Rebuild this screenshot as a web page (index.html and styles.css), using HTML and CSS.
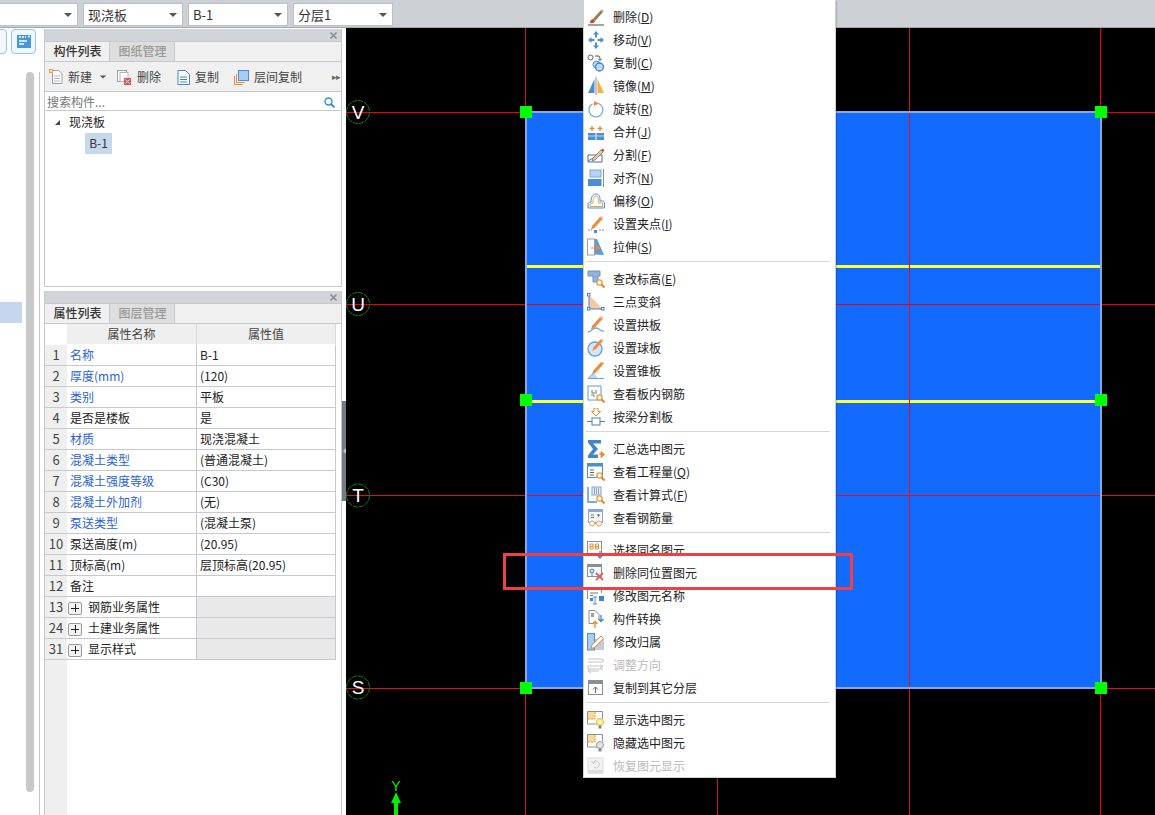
FILE: index.html
```html
<!DOCTYPE html>
<html lang="zh-CN">
<head>
<meta charset="utf-8">
<title>现浇板</title>
<link rel="stylesheet" href="styles.css">
</head>
<body>
<svg class="defs" width="0" height="0">
  <symbol id="pencil" viewBox="0 0 18 18"><path d="M6 13l8-9 2.500 2-8 9-3.500 1.500z" fill="#f08a3c"/><path d="M14 4l1-1 2.500 2-1 1z" fill="#f5b27a"/></symbol>
  <symbol id="mag" viewBox="0 0 18 18"><circle cx="11.500" cy="11.500" r="2.600" fill="#fff" stroke="#e8a13a" stroke-width="1.400"/><path d="M13.500 13.500l3 3" stroke="#ee7f2d" stroke-width="2"/></symbol>
</svg>

<header class="topbar">
  <div class="select s0"><span></span><i class="caret"></i></div>
  <div class="select"><span>现浇板</span><i class="caret"></i></div>
  <div class="select"><span>B-1</span><i class="caret"></i></div>
  <div class="select"><span>分层1</span><i class="caret"></i></div>
</header>

<main class="main">
  <aside class="side">
    <div class="side-btns">
      <div class="sbtn cut"></div>
      <div class="sbtn"><svg width="14" height="13" viewBox="0 0 14 13"><rect width="14" height="13" fill="#4b95dd"/><path d="M2 2h2M5 2h2M8 2h1M11 1.500h2M2 6h8M2 9h5" stroke="#fff" stroke-width="1.300"/></svg></div>
    </div>
    <div class="side-body">
      <div class="side-list"><div class="side-sel"></div></div>
      <div class="side-scroll"></div>
    </div>
  </aside>

  <section class="panels">
    <div class="panel p1">
      <div class="ptitle"><svg width="9" height="9" viewBox="0 0 9 9"><path d="M1.500 1.500l6 6M7.500 1.500l-6 6" stroke="#8a8d92" stroke-width="1.700"/></svg></div>
      <div class="tabs"><span class="tab on">构件列表</span><span class="tab">图纸管理</span></div>
      <div class="tools">
        <span class="tool t-new"><svg width="14" height="16" viewBox="0 0 14 16"><path d="M3.500 1.500h6l3.500 3v10h-9.500z" fill="#fff" stroke="#9aa0a6"/><path d="M5 7h6M5 9.500h6M5 12h6" stroke="#b5b9bd"/><path d="M0 0h4v4h-4z" fill="#f0a040"/><path d="M1 1h2v2h-2z" fill="#fde7b5"/></svg>新建</span>
        <i class="caret t-caret"></i>
        <span class="tool t-del"><svg width="15" height="15" viewBox="0 0 15 15"><rect x=".5" y=".5" width="9" height="11" fill="#fff" stroke="#9aa0a6"/><rect x="3" y="2.500" width="8" height="9" fill="#fff" stroke="#b0b5ba"/><rect x="7" y="8" width="7" height="7" fill="#e05050"/><path d="M8.500 9.500l4 4M12.500 9.500l-4 4" stroke="#fff"/></svg>删除</span>
        <span class="tool t-copy"><svg width="13" height="15" viewBox="0 0 13 15"><path d="M1 .5h7.500l4 4v10h-11.500z" fill="#fff" stroke="#3f86cc"/><path d="M3 7h7M3 9.500h7M3 12h7" stroke="#3f86cc"/></svg>复制</span>
        <span class="tool t-floor"><svg width="15" height="15" viewBox="0 0 15 15"><path d="M.5 6v8.500h8M2.500 4v8.500h8" fill="none" stroke="#e08a45"/><rect x="4.500" y=".5" width="10" height="10" fill="#a9cdf2" stroke="#4b8fd6"/></svg>层间复制</span>
        <span class="more">▸▸</span>
      </div>
      <div class="search"><span>搜索构件...</span><svg width="11" height="11" viewBox="0 0 11 11"><circle cx="4.500" cy="4.500" r="3.500" fill="none" stroke="#2f90c8" stroke-width="1.400"/><path d="M7 7l3.500 3.500" stroke="#2f90c8" stroke-width="1.800"/></svg></div>
      <div class="tree">
        <div class="tnode"><i class="tarrow"></i><span>现浇板</span></div>
        <div class="tleaf"><span>B-1</span></div>
      </div>
    </div>

    <div class="panel p2">
      <div class="ptitle"><svg width="9" height="9" viewBox="0 0 9 9"><path d="M1.500 1.500l6 6M7.500 1.500l-6 6" stroke="#8a8d92" stroke-width="1.700"/></svg></div>
      <div class="tabs"><span class="tab on">属性列表</span><span class="tab">图层管理</span></div>
      <div class="grid">
        <table class="props">
          <colgroup><col class="c0"><col class="c1"><col class="c2"></colgroup>
          <thead><tr><th class="blank"></th><th>属性名称</th><th>属性值</th></tr></thead>
          <tbody>
            <tr><td class="n">1</td><td class="k">名称</td><td>B-1</td></tr>
            <tr><td class="n">2</td><td class="k">厚度(mm)</td><td>(120)</td></tr>
            <tr><td class="n">3</td><td class="k">类别</td><td>平板</td></tr>
            <tr><td class="n">4</td><td>是否是楼板</td><td>是</td></tr>
            <tr><td class="n">5</td><td class="k">材质</td><td>现浇混凝土</td></tr>
            <tr><td class="n">6</td><td class="k">混凝土类型</td><td>(普通混凝土)</td></tr>
            <tr><td class="n">7</td><td class="k">混凝土强度等级</td><td>(C30)</td></tr>
            <tr><td class="n">8</td><td class="k">混凝土外加剂</td><td>(无)</td></tr>
            <tr><td class="n">9</td><td class="k">泵送类型</td><td>(混凝土泵)</td></tr>
            <tr><td class="n">10</td><td>泵送高度(m)</td><td>(20.95)</td></tr>
            <tr><td class="n">11</td><td>顶标高(m)</td><td>层顶标高(20.95)</td></tr>
            <tr><td class="n">12</td><td>备注</td><td></td></tr>
            <tr class="grp"><td class="n">13</td><td><i class="plus"></i>钢筋业务属性</td><td></td></tr>
            <tr class="grp"><td class="n">24</td><td><i class="plus"></i>土建业务属性</td><td></td></tr>
            <tr class="grp"><td class="n">31</td><td><i class="plus"></i>显示样式</td><td></td></tr>
          </tbody>
        </table>
      </div>
    </div>
  </section>

  <div class="splitter"><div class="grip"><i></i></div></div>

  <section class="canvas">
    <svg class="cad" width="809" height="787" viewBox="346 28 809 787" shape-rendering="crispEdges">
      <rect x="346" y="28" width="809" height="787" fill="#000"/>
      <rect x="526" y="112" width="575" height="576" fill="#126aff"/>
      <rect x="527" y="265" width="573" height="3" fill="#ffff33"/>
      <rect x="527" y="400" width="573" height="3" fill="#ffff33"/>
      <g fill="#d81414">
        <rect x="525" y="28" width="1" height="787"/>
        <rect x="717" y="688" width="1" height="127"/>
        <rect x="909" y="28" width="1" height="787"/>
        <rect x="346" y="495" width="809" height="1"/>
        <rect x="346" y="688" width="809" height="1"/>
      </g>
      <g fill="#f00000">
        <rect x="1100" y="28" width="1" height="787"/>
        <rect x="346" y="112" width="809" height="1"/>
        <rect x="346" y="304" width="809" height="1"/>
      </g>
      <path d="M526 112h575v576h-575z" fill="none" stroke="#86a9ee" stroke-width="2"/>
      <g fill="#00ff00">
        <rect x="520" y="106" width="12" height="12"/><rect x="1095" y="106" width="12" height="12"/>
        <rect x="520" y="394" width="12" height="12"/><rect x="1095" y="394" width="12" height="12"/>
        <rect x="520" y="682" width="12" height="12"/><rect x="1095" y="682" width="12" height="12"/>
      </g>
      <g shape-rendering="auto">
        <g fill="none" stroke="#0c8a0c" stroke-dasharray="5 1">
          <circle cx="358" cy="112" r="11.500"/><circle cx="358" cy="304" r="11.500"/>
          <circle cx="358" cy="495.500" r="11.500"/><circle cx="358" cy="687.500" r="11.500"/>
        </g>
        <g class="axis">
          <text x="358" y="119">V</text><text x="358" y="311">U</text>
          <text x="358" y="502">T</text><text x="358" y="694">S</text>
        </g>
        <text class="yaxis" x="396" y="791">Y</text>
        <path d="M391 803l5-11 5 11h-3v12h-4v-12z" fill="#00ee00"/>
      </g>
    </svg>
  </section>
</main>

<nav class="menu">
  <div class="mi"><svg viewBox="0 0 18 18"><path d="M6 11l8-9 2 2-8 9z" fill="#9a7a52"/><path d="M14 2l1-1 2 2-1 1z" fill="#d7b98c"/><path d="M3 15c0-3 2-4 3-4l2 2c0 1.500-2 2.500-5 2z" fill="#cc4a22"/><path d="M1 17h16" stroke="#444"/></svg><span>删除(<u>D</u>)</span></div>
  <div class="mi"><svg viewBox="0 0 18 18"><g fill="#4a8fd6"><path d="M9 0l3 3.500h-2v3h-2v-3h-2zM9 18l3-3.500h-2v-3h-2v3h-2zM1 9l3.500-3v2h3v2h-3v2zM17 9l-3.500-3v2h-3v2h3v2z"/></g></svg><span>移动(<u>V</u>)</span></div>
  <div class="mi"><svg viewBox="0 0 18 18"><circle cx="3.500" cy="3.500" r="2.500" fill="#fff" stroke="#666"/><path d="M8 2h4l1 2v2M11.500 5l1.500 1.500 1.500-1.500" fill="none" stroke="#555"/><circle cx="9.500" cy="10.500" r="3.500" fill="#bcd8f4" stroke="#4a8fd6"/><circle cx="12.500" cy="13" r="4" fill="#bcd8f4" stroke="#3f86cc" stroke-width="1.300"/></svg><span>复制(<u>C</u>)</span></div>
  <div class="mi"><svg viewBox="0 0 18 18"><path d="M7.500 2v14h-6.500z" fill="#4a8fd6"/><path d="M10.500 2v14h6.500z" fill="#f4b23c"/><path d="M9 0v18" stroke="#8a8f95"/></svg><span>镜像(<u>M</u>)</span></div>
  <div class="mi"><svg viewBox="0 0 18 18"><path d="M5.500 3.800a7 7 0 1 0 6 -.4" fill="none" stroke="#7db0e4" stroke-width="1.400"/><path d="M7 1l5 2.500-5 2.500z" fill="#f0862e"/></svg><span>旋转(<u>R</u>)</span></div>
  <div class="mi"><svg viewBox="0 0 18 18"><rect x="1" y="10" width="7.500" height="7" fill="#4a8fd6"/><rect x="9.500" y="10" width="7.500" height="7" fill="#4a8fd6"/><path d="M1 13h16" stroke="#bcd8f4"/><path d="M5 3v5M2.500 5.500h5M13 3v5M10.500 5.500h5" stroke="#f0862e" stroke-width="1.300"/></svg><span>合并(<u>J</u>)</span></div>
  <div class="mi"><svg viewBox="0 0 18 18"><path d="M1 9h14v7h-14z" fill="none" stroke="#4d6ea8"/><path d="M1 15l9-5" stroke="#777"/><path d="M6 12l8-8 2 2-8 8-3 1z" fill="#e8c89a" stroke="#555" stroke-width=".6"/><path d="M14 4l1.500-1.500 2 2-1.500 1.500z" fill="#c0503a"/></svg><span>分割(<u>F</u>)</span></div>
  <div class="mi"><svg viewBox="0 0 18 18"><rect x="3" y="1" width="11" height="7" fill="#b8d4f2" stroke="#7aa8dc"/><rect x="1" y="10" width="13.500" height="7" fill="#4a8fd6"/><path d="M16.500 0v18" stroke="#8a8f95"/></svg><span>对齐(<u>N</u>)</span></div>
  <div class="mi"><svg viewBox="0 0 18 18"><path d="M1 16v-4c0-1 1-2 3-2 0-4 1-8 5-8s4 4 4 7h3c1 0 1.500 1 1.500 2v5z" fill="#fff" stroke="#4a8fd6"/><path d="M3 14.500v-2.500c1-.5 2-.5 3-1 0-3 .5-7 3-7s2.500 4 2.500 7h4v3.500z" fill="#fff" stroke="#e09a3a" stroke-width=".9"/></svg><span>偏移(<u>O</u>)</span></div>
  <div class="mi"><svg viewBox="0 0 18 18"><use href="#pencil" x="-1" y="-2" width="18" height="18"/><path d="M1 15h4M12 15h5" stroke="#8a8f95" stroke-dasharray="2 1"/><rect x="7" y="15" width="3" height="3" fill="#4a8fd6"/></svg><span>设置夹点(<u>I</u>)</span></div>
  <div class="mi"><svg viewBox="0 0 18 18"><rect x=".5" y="1" width="7" height="16" fill="#fff" stroke="#9aa0a6"/><path d="M8 16.500v-15.500l2 0 7 16z" fill="#5c9ade"/><path d="M4 10h8M10 7.500l3 2.500-3 2.500z" fill="#f0862e" stroke="#f0862e"/></svg><span>拉伸(<u>S</u>)</span></div>
  <div class="sep"></div>
  <div class="mi"><svg viewBox="0 0 18 18"><path d="M1 1h12v5h-2v6h-5v-6h-5z" fill="#8fb3d9" stroke="#6d94bf"/><use href="#mag" x="1" y="1" width="18" height="18"/></svg><span>查改标高(<u>E</u>)</span></div>
  <div class="mi"><svg viewBox="0 0 18 18"><path d="M2 2v14h14z" fill="#f9c9a5"/><path d="M2 3.500v11M3.500 16h11" stroke="#4a7fc4"/><g fill="#fff" stroke="#4a7fc4"><rect x=".5" y=".5" width="2.500" height="2.500"/><rect x=".5" y="14.500" width="2.500" height="2.500"/><rect x="14.500" y="14.500" width="2.500" height="2.500"/></g></svg><span>三点变斜</span></div>
  <div class="mi"><svg viewBox="0 0 18 18"><use href="#pencil" x="-1" y="-3" width="18" height="18"/><path d="M1 16c3 0 4-4 8-4s4 4 8 3" fill="none" stroke="#7aa8dc" stroke-width="1.400"/></svg><span>设置拱板</span></div>
  <div class="mi"><svg viewBox="0 0 18 18"><circle cx="8" cy="10" r="7" fill="#d5e6f8" stroke="#6a9fd8" stroke-width="1.400"/><use href="#pencil" x="1" y="-3" width="16" height="16"/></svg><span>设置球板</span></div>
  <div class="mi"><svg viewBox="0 0 18 18"><use href="#pencil" x="0" y="-4" width="18" height="18"/><path d="M1 16.500l6-6 4 6z" fill="#bcd8f4"/><path d="M1 16.500h16M1 16.500l6-6" fill="none" stroke="#6a9fd8"/></svg><span>设置锥板</span></div>
  <div class="mi"><svg viewBox="0 0 18 18"><rect x="1" y="1" width="13" height="14" fill="#fff" stroke="#5c9ade"/><path d="M5 5v3h3M4 10h3v2M9 5v4" fill="none" stroke="#777"/><use href="#mag" x="1" y="1" width="18" height="18"/></svg><span>查看板内钢筋</span></div>
  <div class="mi"><svg viewBox="0 0 18 18"><path d="M7 0h4v3.500h2.500l-4.500 4.500-4.500-4.500h2.500z" fill="#fff" stroke="#f0862e"/><rect x="5" y="10" width="8" height="7" fill="#fff" stroke="#4a7fc4"/><path d="M0 13.500h5M13 13.500h5" stroke="#4a7fc4"/></svg><span>按梁分割板</span></div>
  <div class="sep"></div>
  <div class="mi"><svg viewBox="0 0 18 18"><path d="M1 0h13v3.500h-8l5 5.500-5 5.500h5v3.500h-10v-2.500l5-6.500-5-6.500z" fill="#3f86cc"/><path d="M12 14h3M14 11.500l3.500 3-3.500 3z" fill="#f0862e" stroke="#f0862e"/></svg><span>汇总选中图元</span></div>
  <div class="mi"><svg viewBox="0 0 18 18"><rect x=".5" y=".5" width="15" height="14" fill="#fff" stroke="#4a8fd6"/><rect x=".5" y=".5" width="15" height="3" fill="#4a8fd6"/><path d="M3 7h4M3 9.500h4M3 12h4" stroke="#666"/><use href="#mag" x="1" y="1" width="18" height="18"/></svg><span>查看工程量(<u>Q</u>)</span></div>
  <div class="mi"><svg viewBox="0 0 18 18"><path d="M1 1v15h9" fill="none" stroke="#4a8fd6" stroke-width="1.400"/><rect x="5" y="1" width="9" height="8" fill="#dfeaf6" stroke="#7aa8dc"/><path d="M7 3h1M9 3h1M11 3h1M7 5h1M9 5h1M11 5h1M7 7h1M9 7h1M11 7h1" stroke="#666"/><use href="#mag" x="1" y="1" width="18" height="18"/></svg><span>查看计算式(<u>F</u>)</span></div>
  <div class="mi"><svg viewBox="0 0 18 18"><rect x="1.500" y=".5" width="14" height="13" fill="#f4f7fb" stroke="#8aa9cc"/><rect x="1.500" y=".5" width="14" height="2.500" fill="#8aa9cc"/><path d="M4 6h3M4 8.500h3M10 6h3M11.500 5v3" stroke="#777"/><circle cx="5" cy="14.500" r="2.500" fill="#fff" stroke="#ea9a55"/><circle cx="12" cy="14.500" r="2.500" fill="#fff" stroke="#ea9a55"/><path d="M7.500 14.500h2" stroke="#ea9a55"/></svg><span>查看钢筋量</span></div>
  <div class="sep"></div>
  <div class="mi"><svg viewBox="0 0 18 18"><rect x=".5" y=".5" width="14" height="14" fill="#fff" stroke="#8a8f95"/><path d="M3 3h3v5h-3zM3 5.500h3M8.500 3h3v5h-3zM8.500 5.500h3" fill="none" stroke="#f0862e"/><path d="M13 10v7M10.500 14.500l2.500 2.500 2.500-2.500" fill="none" stroke="#4a8fd6" stroke-width="1.300"/></svg><span>选择同名图元</span></div>
  <div class="mi"><svg viewBox="0 0 18 18"><rect x=".5" y=".5" width="14" height="12" fill="#f5f8fc" stroke="#8a8f95"/><rect x=".5" y=".5" width="14" height="2.500" fill="#8a8f95"/><circle cx="5" cy="7" r="2" fill="#bcd8f4" stroke="#4a8fd6"/><path d="M5 9v3" stroke="#4a8fd6"/><path d="M9 9l7 7M16 9l-7 7" stroke="#e0605a" stroke-width="1.800"/></svg><span>删除同位置图元</span></div>
  <div class="mi"><svg viewBox="0 0 18 18"><path d="M.5 12v-11h14v5" fill="none" stroke="#8a8f95"/><path d="M.5 1h14v2h-14z" fill="#4a8fd6"/><path d="M3 6h8M3 8.500h3" stroke="#777"/><rect x="12" y="9" width="5" height="5" fill="#3f86cc"/><path d="M6 10h4M8 10v7M6 17h4" stroke="#4a8fd6"/><rect x="3" y="11" width="3" height="3" fill="#3f86cc"/></svg><span>修改图元名称</span></div>
  <div class="mi"><svg viewBox="0 0 18 18"><path d="M2 .5h6l4 4v5M2 .5v13h5" fill="none" stroke="#8a8f95"/><rect x="4" y="3" width="3" height="4" fill="#9aa0a6"/><path d="M14 5v6M11.500 9l2.500 2.500 2.500-2.500" fill="none" stroke="#3f86cc" stroke-width="1.300"/><path d="M8 18v-6M5.500 14l2.500-2.500 2.500 2.500" fill="none" stroke="#f0862e" stroke-width="1.300"/></svg><span>构件转换</span></div>
  <div class="mi"><svg viewBox="0 0 18 18"><rect x=".5" y=".5" width="7" height="16.500" fill="#a9cdf2" stroke="#4a8fd6"/><rect x="8" y="6" width="9" height="11" fill="#c8ccd0"/><path d="M5 12l9-9 2.500 2.500-9 9-3.500 1z" fill="#fff" stroke="#f0862e"/></svg><span>修改归属</span></div>
  <div class="mi off"><svg viewBox="0 0 18 18"><path d="M1 3h15v3h-15M16 10h-15v3h15M1 15h11M4 13l-3 2 3 2M13 9l3 1.500-3 1.500" fill="none" stroke="#c4c4c4"/></svg><span>调整方向</span></div>
  <div class="mi"><svg viewBox="0 0 18 18"><rect x="1.500" y="1.500" width="14" height="14" fill="#fff" stroke="#8a8f95"/><rect x="1.500" y="1.500" width="14" height="3.500" fill="#8a8f95"/><path d="M8.500 14v-6M6 10.500l2.500-2.500 2.500 2.500" fill="none" stroke="#666"/></svg><span>复制到其它分层</span></div>
  <div class="sep"></div>
  <div class="mi"><svg viewBox="0 0 18 18"><path d="M11 13h-10.500v-12.500h15v7" fill="none" stroke="#8a8f95"/><rect x="1" y="1" width="7" height="7" fill="#fbd99a"/><path d="M1 8h7v-7" fill="none" stroke="#e89a30" stroke-dasharray="2 1"/><circle cx="13" cy="11" r="3.500" fill="#fff1a0" stroke="#e0b828"/><rect x="11.500" y="14.500" width="3" height="3" fill="#888"/></svg><span>显示选中图元</span></div>
  <div class="mi"><svg viewBox="0 0 18 18"><path d="M11 13h-10.500v-12.500h15v7" fill="none" stroke="#8a8f95"/><rect x="1" y="1" width="7" height="7" fill="#fbd99a"/><path d="M1 8h7v-7" fill="none" stroke="#e89a30" stroke-dasharray="2 1"/><circle cx="13" cy="11" r="3.500" fill="#e4e4e4" stroke="#999"/><rect x="11.500" y="14.500" width="3" height="3" fill="#888"/></svg><span>隐藏选中图元</span></div>
  <div class="mi off"><svg viewBox="0 0 18 18"><rect x="1" y="1" width="15" height="15" fill="#f3f3f3" stroke="#dcdcdc"/><rect x="1" y="13" width="15" height="3.500" fill="#dcdcdc"/><path d="M6 5.500a3.500 3.500 0 1 1 1 5M4.500 4l1.500 2.500 2.500-1" fill="none" stroke="#c8c8c8"/></svg><span>恢复图元显示</span></div>
</nav>

<div class="callout"></div>
</body>
</html>
```

FILE: styles.css
```css
* { box-sizing: border-box; }
html, body { margin: 0; padding: 0; height: 100%; overflow: hidden; }
body {
  position: relative;
  display: flex;
  flex-direction: column;
  width: 1155px;
  height: 815px;
  background: #fff;
  color: #222;
  font: 12px/1.2 "Noto Sans CJK SC", "Noto Sans", sans-serif;
}
.defs { position: absolute; }

/* top bar */
.topbar {
  flex: 0 0 28px;
  display: flex;
  gap: 5px;
  padding-top: 3px;
  background: #cdd0d5;
  border-bottom: 1px solid #a3a6ab;
  margin-left: -22px;
}
.select {
  width: 100px;
  height: 23px;
  padding: 0 4px;
  display: flex;
  align-items: center;
  justify-content: space-between;
  background: #fff;
  border: 1px solid #bcbfc4;
  font-size: 13px;
  color: #333;
}
.caret {
  width: 0; height: 0;
  border: 4px solid transparent;
  border-top: 4px solid #555;
  border-bottom: 0;
  margin-right: 1px;
}

/* layout */
.main { flex: 1; display: flex; min-height: 0; }
.side { flex: 0 0 44px; background: #fff; }
.side-btns {
  width: 58px;
  height: 44px;
  display: flex;
  gap: 4px;
  align-items: flex-start;
  padding-top: 1px;
  margin-left: -18px;
}
.sbtn {
  flex: 0 0 25px;
  height: 25px;
  display: flex;
  align-items: center;
  justify-content: center;
  background: #f0f7ff;
  border: 1px solid #92c4f2;
  border-radius: 4px;
}
.side-body {
  width: 40px;
  height: 743px;
  display: flex;
  border-right: 1px solid #c4c4c4;
}
.side-list { flex: 0 0 26px; padding-top: 230px; }
.side-sel { width: 22px; height: 21px; background: #c5d7ee; }
.side-scroll { width: 8px; height: 720px; background: #c9c9c9; border-radius: 4px; }

.panels { flex: 0 0 298px; display: flex; flex-direction: column; gap: 4px; padding-top: 1px; }
.panel { display: flex; flex-direction: column; border: 1px solid #c6c9ce; border-top: 0; background: #fff; }
.p1 { height: 258px; }
.p2 { flex: 1; min-height: 0; border-bottom: 0; }
.ptitle {
  flex: 0 0 12px;
  display: flex;
  align-items: center;
  justify-content: flex-end;
  padding-right: 3px;
  background: #d2d4d9;
}
.tabs {
  flex: 0 0 21px;
  display: flex;
  background: #f0f0f0;
  border-top: 1px solid #c6c9ce;
  border-bottom: 1px solid #c6c9ce;
}
.tab {
  width: 65px;
  display: flex;
  align-items: center;
  justify-content: center;
  border-right: 1px solid #c6c9ce;
  background: #dedede;
  color: #999;
  font-weight: 500;
  padding-left: 1px;
}
.tab.on { background: #f0f0f0; color: #333; }

/* toolbar */
.tools {
  flex: 0 0 30px;
  display: flex;
  align-items: center;
  padding-top: 1px;
  background: #f0f0f0;
  border-bottom: 1px solid #c6c9ce;
  color: #444;
}
.tool { display: flex; align-items: center; gap: 5px; }
.t-new { margin-left: 4px; }
.t-caret { margin-left: 7px; transform: scale(.8); }
.t-del { margin-left: 9px; }
.t-copy { margin-left: 16px; }
.t-floor { margin-left: 15px; }
.more { margin-left: auto; margin-right: 1px; font-size: 9px; letter-spacing: -1px; color: #666; }

.search {
  flex: 0 0 19px;
  display: flex;
  align-items: center;
  justify-content: space-between;
  padding: 2px 6px 0 2px;
  border-bottom: 1px solid #c6c9ce;
  color: #777;
}
.tree { flex: 1; padding-top: 1px; color: #222; }
.tnode { height: 21px; display: flex; align-items: center; padding-left: 10px; }
.tarrow {
  width: 0; height: 0;
  margin-right: 9px;
  border-left: 5px solid transparent;
  border-bottom: 5px solid #444;
}
.tleaf { height: 21px; padding-left: 40px; }
.tleaf span {
  display: flex;
  align-items: center;
  justify-content: center;
  width: 27px;
  height: 21px;
  background: #c7d7ee;
  color: #333;
}

/* property grid */
.grid { flex: 1; background: linear-gradient(to right, #efefef 22px, #fff 22px); overflow: hidden; }
.props { width: 291px; table-layout: fixed; border-collapse: separate; border-spacing: 0; }
.c0 { width: 22px; }
.c1 { width: 130px; }
.props th {
  height: 21px;
  padding: 0;
  background: #efefef;
  border-right: 1px solid #d8dadd;
  border-bottom: 1px solid #fff;
  font-weight: 400;
  color: #444;
}
.props th.blank { background: #fff; border: 0; }
.props td {
  height: 21px;
  padding: 0 0 0 3px;
  border-right: 1px solid #c6c9d0;
  border-bottom: 1px solid #c6c9d0;
  color: #222;
  white-space: nowrap;
  overflow: hidden;
}
.props td.n {
  padding: 0;
  text-align: center;
  background: #efefef;
  border-right: 0;
  border-bottom: 1px solid #c6c9d0;
  color: #444;
  font-size: 13px;
}
.props td.k { color: #2a62dc; }
.grp td:last-child { background: #e9e9e9; }
.plus {
  display: inline-block;
  vertical-align: -3px;
  width: 14px;
  height: 13px;
  margin: 0 6px 0 -2px;
  border: 1px solid #999;
  border-radius: 2px;
  background:
    linear-gradient(#222, #222) center / 8px 1px no-repeat,
    linear-gradient(#222, #222) center / 1px 8px no-repeat,
    #f4f4f4;
}

/* splitter */
.splitter { flex: 0 0 4px; background: #fff; padding-top: 373px; }
.grip {
  width: 4px;
  height: 100px;
  background: #737b83;
  display: flex;
  align-items: center;
}
.grip i {
  width: 0; height: 0;
  border: 3px solid transparent;
  border-right: 3px solid #c8c8c8;
  border-left: 0;
  margin-left: 1px;
}

/* drawing */
.canvas { flex: 1; min-width: 0; background: #000; }
.cad { display: block; }
.axis text {
  fill: #fff;
  font: 19px "Liberation Sans", sans-serif;
  text-anchor: middle;
}
.yaxis {
  fill: #00ee00;
  font: 14px "Liberation Sans", sans-serif;
  text-anchor: middle;
}

/* context menu */
.menu {
  position: absolute;
  left: 583px;
  top: 0;
  width: 253px;
  height: 778px;
  padding-top: 5px;
  background: #fff;
  border: 1px solid #cfd0d2;
  border-top: 0;
  box-shadow: 1px 1px 1px rgba(0, 0, 0, .15);
}
.mi { height: 23px; display: flex; align-items: center; gap: 8px; padding-left: 3px; color: #222; }
.mi svg { flex: 0 0 18px; width: 18px; height: 18px; }
.mi span { padding-top: 2px; }
.mi.off { color: #bbb; }
.sep { height: 9px; margin: 0 5px 0 2px; padding-top: 3px; }
.sep::before { content: ""; display: block; height: 1px; background: #d6d6d6; }

.callout {
  position: absolute;
  left: 503px;
  top: 553px;
  width: 350px;
  height: 37px;
  border: 3px solid #f24040;
}
```
